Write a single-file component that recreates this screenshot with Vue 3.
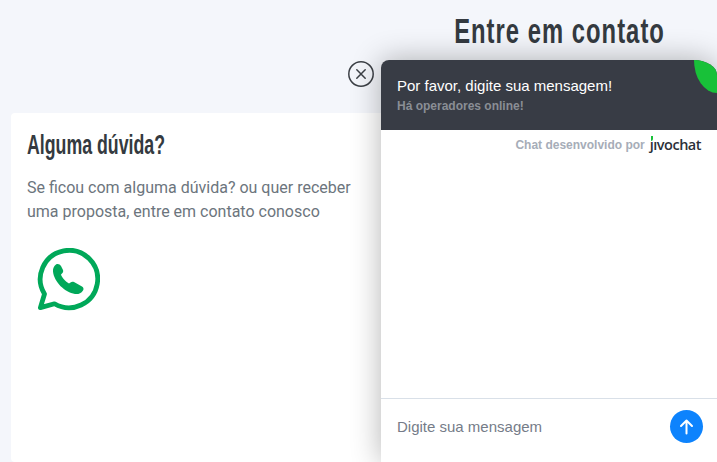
<template>
  <div class="page">
    <header class="page-head">
      <h1>Entre em contato</h1>
    </header>

    <section class="card">
      <h2>Alguma dúvida?</h2>
      <p>Se ficou com alguma dúvida? ou quer receber uma proposta, entre em contato conosco</p>
      <a class="whats" href="#" aria-label="WhatsApp">
        <svg viewBox="0 0 63 63" width="63" height="63">
          <path d="M17.5 55.8A28.7 28.7 0 1 0 7.5 46L3.4 59.6Z" fill="none" stroke="#00a859" stroke-width="4.8" stroke-linejoin="round" />
          <path fill="#00a859" d="M19 16.5C21 15.5 23 16.5 24 18L26 22C26.5 23.5 26 24.5 25 25.5L24 26.5C24.5 29 28 33 32 35.5L33.5 34.5C34.5 33.5 36 33.5 37 34L45 38.5C46.5 39.5 47 41 46 42.5C44 45.5 41 46.5 38 46C28 44.5 17 34 16 23.5C15.7 20.5 17 18 19 16.5Z" />
        </svg>
      </a>
    </section>

    <button class="chat-close" aria-label="Fechar">
      <svg viewBox="0 0 26 26" width="26" height="26">
        <circle cx="13" cy="13" r="12.2" fill="none" stroke="#3c4046" stroke-width="1.5" />
        <path d="M8.8 8.8l8.4 8.4M17.2 8.8l-8.4 8.4" stroke="#3c4046" stroke-width="1.5" stroke-linecap="round" />
      </svg>
    </button>

    <aside class="chat">
      <div class="chat-head">
        <div class="chat-title">Por favor, digite sua mensagem!</div>
        <div class="chat-sub">Há operadores online!</div>
        <span class="leaf"></span>
      </div>
      <div class="chat-body">
        <div class="credit">
          <span>Chat desenvolvido por</span>
          <span class="logo"><i class="logo-leaf"></i>ȷıvochat</span>
        </div>
      </div>
      <div class="chat-foot">
        <span class="placeholder">Digite sua mensagem</span>
        <button class="send" aria-label="Enviar">
          <svg viewBox="0 0 33 33" width="33" height="33">
            <path d="M16.5 23.5V10.5M11 16l5.5-5.5L22 16" fill="none" stroke="#fff" stroke-width="2" stroke-linecap="round" stroke-linejoin="round" />
          </svg>
        </button>
      </div>
    </aside>
  </div>
</template>

<script setup>
</script>

<style scoped>
.page {
  position: relative;
  height: 462px;
  overflow: hidden;
  background: #f4f6fb;
  font-family: Roboto, sans-serif;
}

/* no Oswald here, so the headings are squeezed Liberation Sans */
.page-head {
  display: flex;
  justify-content: flex-end;
  height: 113px;
  padding: 12px 52px 0 0;
  box-sizing: border-box;
}

.page-head h1 {
  margin: 0;
  font-family: "Liberation Sans", sans-serif;
  font-size: 35px;
  line-height: 38px;
  font-weight: 700;
  letter-spacing: 1.5px;
  white-space: nowrap;
  color: #343a40;
  transform: scaleX(0.68);
  transform-origin: right center;
}

.card {
  width: 420px;
  height: 349px;
  margin-left: 11px;
  padding: 17px 16px 16px;
  box-sizing: border-box;
  background: #fff;
  border-radius: 4px;
}

.card h2 {
  margin: 0 0 16px;
  font-family: "Liberation Sans", sans-serif;
  font-size: 27px;
  line-height: 30px;
  font-weight: 700;
  white-space: nowrap;
  color: #343a40;
  transform: scaleX(0.657);
  transform-origin: left center;
}

.card p {
  width: 335px;
  margin: 0 0 24px;
  font-size: 16px;
  line-height: 24px;
  color: #6c757d;
}

.whats {
  display: block;
  margin-left: 10px;
  height: 63px;
}

.chat-close {
  position: absolute;
  left: 348px;
  top: 61px;
  width: 26px;
  height: 26px;
  padding: 0;
  border: 0;
  background: transparent;
}

.chat {
  position: absolute;
  left: 381px;
  top: 60px;
  right: 0;
  bottom: 0;
  display: flex;
  flex-direction: column;
  background: #fff;
  border-radius: 8px 23px 0 0 / 8px 15px 0 0;
  box-shadow: 0 0 30px rgba(0, 0, 0, 0.3);
  font-family: "Liberation Sans", Arial, sans-serif;
}

.chat-head {
  position: relative;
  height: 70px;
  padding: 16px 16px 0;
  box-sizing: border-box;
  background: #383c45;
  border-radius: 8px 23px 0 0 / 8px 15px 0 0;
  overflow: hidden;
}

.chat-title {
  font-size: 15px;
  line-height: 20px;
  color: #fff;
}

.chat-sub {
  font-size: 12px;
  line-height: 20px;
  font-weight: 700;
  color: #8a8e95;
}

.leaf {
  position: absolute;
  right: 0;
  top: 0;
  width: 23px;
  height: 33px;
  background: #18c139;
  border-radius: 0 0 0 100%;
}

.chat-body {
  flex: 1;
  padding: 6px 16px 0;
}

.credit {
  display: flex;
  justify-content: flex-end;
  align-items: center;
  gap: 5px;
  font-size: 12px;
  line-height: 18px;
  font-weight: 700;
  color: #a6adb8;
}

.logo {
  position: relative;
  font-family: "Open Sans", sans-serif;
  font-size: 14.5px;
  font-weight: 600;
  letter-spacing: -0.5px;
  color: #2b3038;
}

.logo-leaf {
  position: absolute;
  left: 1px;
  top: 0;
  width: 2.5px;
  height: 5px;
  background: #18c139;
  border-radius: 0 0 3px 0;
}

.chat-foot {
  display: flex;
  align-items: center;
  justify-content: space-between;
  height: 64px;
  padding: 0 14px 8px 16px;
  box-sizing: border-box;
  border-top: 1px solid #d9e0e8;
}

.placeholder {
  font-size: 15px;
  color: #757c88;
}

.send {
  width: 33px;
  height: 33px;
  padding: 0;
  border: 0;
  border-radius: 50%;
  background: #0d83fd;
}
</style>
